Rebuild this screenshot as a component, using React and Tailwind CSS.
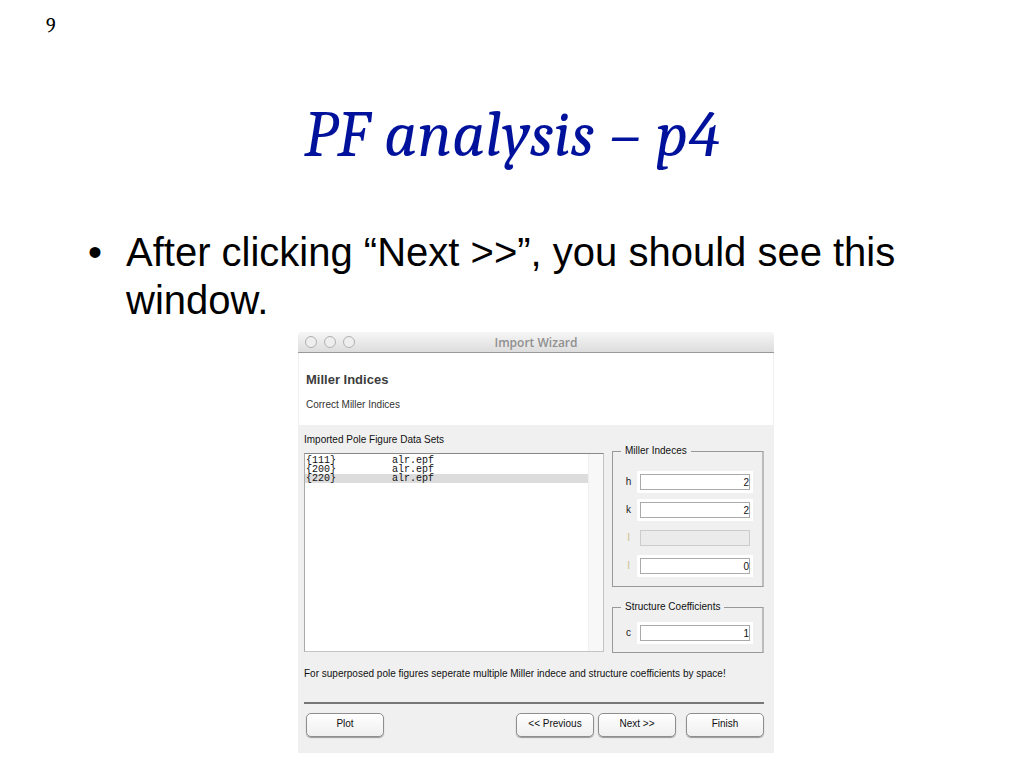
import { useState } from "react";

const dataSets = [
  { id: 1, indices: "{111}", file: "alr.epf" },
  { id: 2, indices: "{200}", file: "alr.epf" },
  { id: 3, indices: "{220}", file: "alr.epf" },
];

const millerFields = [
  { id: "h", label: "h", value: "2" },
  { id: "k", label: "k", value: "2" },
  { id: "i", label: "l", value: "", disabled: true, dim: true },
  { id: "l", label: "l", value: "0", dim: true },
];

function Field({ id, label, value, disabled, dim }) {
  return (
    <div className="flex items-center">
      <label
        htmlFor={id}
        className={`w-[23px] text-center ${dim ? "text-[#c9bf8a]" : "text-[#222222]"}`}
      >
        {label}
      </label>
      <input
        id={id}
        type="text"
        defaultValue={value}
        disabled={disabled}
        className={`h-4 w-0 min-w-0 flex-1 border text-right text-[10px] ${
          disabled
            ? "border-[#cccccc] bg-[#ebebeb]"
            : "border-[#aaaaaa] bg-white ring-3 ring-white"
        }`}
      />
    </div>
  );
}

function Group({ title, children }) {
  return (
    <fieldset className="min-w-0 border border-r-2 border-[#999999] border-r-[#bcbcbc] pr-3 pl-1">
      <legend className="ml-1 px-1 text-[10px] leading-3">{title}</legend>
      {children}
    </fieldset>
  );
}

function WizardButton({ children }) {
  return (
    <button
      type="button"
      className="h-6 w-[78px] rounded-[5px] border border-[#8e8e8e] bg-linear-to-b from-white to-[#efefef] pb-[2px] text-[10px] leading-3 shadow-[0_1px_1px_#999999]"
    >
      {children}
    </button>
  );
}

function ImportWizard() {
  const [selected, setSelected] = useState(3);

  return (
    <section className="w-[476px] overflow-hidden rounded-t-sm bg-[#f0f0f0] text-[10px] leading-3 text-[#111111]">
      <header className="grid h-[21px] grid-cols-[1fr_auto_1fr] items-center border-b border-[#999999] bg-linear-to-b from-[#f6f6f6] to-[#dddddd] px-[7px]">
        <div className="flex gap-[7px]">
          {["Close", "Minimize", "Zoom"].map((name) => (
            <button
              key={name}
              type="button"
              aria-label={name}
              className="size-3 rounded-full border border-[#b0b0b0] bg-[#eeeeee]"
            />
          ))}
        </div>
        <h2 className="pt-px font-['Open_Sans','Noto_Sans',sans-serif] text-[12px] leading-4 font-semibold text-[#909090]">
          Import Wizard
        </h2>
      </header>

      <div className="h-[72px] border-x border-[#f0f0f0] bg-white px-[7px] pt-[19px]">
        <h3 className="text-[13px] leading-4 font-bold text-[#3c3c3c]">Miller Indices</h3>
        <p className="mt-[9px] leading-4 text-[#333333]">Correct Miller Indices</p>
      </div>

      <div className="px-[6px] pt-[9px] pb-4">
        <div className="flex gap-2">
          <div className="flex-1">
            <p>Imported Pole Figure Data Sets</p>
            <div className="mt-[7px] flex h-[199px] border border-[#c4c4c4] border-t-[#888888] border-l-[#aaaaaa] bg-white">
              <div className="flex-1 pt-[2px]">
                <table className="w-full border-collapse font-['Liberation_Mono',monospace] text-[10px] leading-[9px]">
                  <tbody>
                    {dataSets.map((set) => (
                      <tr
                        key={set.id}
                        onClick={() => setSelected(set.id)}
                        className={selected === set.id ? "bg-[#dcdcdc]" : ""}
                      >
                        <td className="w-[87px] p-0 pl-px">{set.indices}</td>
                        <td className="p-0">{set.file}</td>
                      </tr>
                    ))}
                  </tbody>
                </table>
              </div>
              <div className="w-[15px] border-l border-[#eeeeee] bg-[#f8f8f8]" />
            </div>
          </div>

          <div className="mr-1 flex w-[152px] flex-col gap-[14px] pt-[11px]">
            <Group title="Miller Indeces">
              <div className="flex flex-col gap-3 pt-[17px] pb-3">
                {millerFields.map((field) => (
                  <Field key={field.id} {...field} />
                ))}
              </div>
            </Group>
            <Group title="Structure Coefficients">
              <div className="pt-3 pb-[11px]">
                <Field id="c" label="c" value="1" />
              </div>
            </Group>
          </div>
        </div>

        <p className="mt-[15px]">
          For superposed pole figures seperate multiple Miller indece and structure coefficients by
          space!
        </p>

        <footer className="mt-[22px] mr-1 flex gap-1 border-t-2 border-[#777777] pt-[9px]">
          <div className="flex-1 pl-[2px]">
            <WizardButton>Plot</WizardButton>
          </div>
          <WizardButton>&lt;&lt; Previous</WizardButton>
          <WizardButton>Next &gt;&gt;</WizardButton>
          <div className="pl-[6px]">
            <WizardButton>Finish</WizardButton>
          </div>
        </footer>
      </div>
    </section>
  );
}

export default function App() {
  return (
    <main className="min-h-screen bg-white font-['Liberation_Sans',Arial,sans-serif] text-black">
      <p className="pt-4 pl-[46px] font-[Cambria,'Liberation_Serif',serif] text-[20px] leading-5">
        9
      </p>
      <h1 className="mt-[59px] text-center font-[Cambria,'Liberation_Serif',serif] text-[65px] leading-20 text-[#00129c] italic">
        PF analysis – p4
      </h1>
      <ul className="mt-[53px] px-[88px]">
        <li className="flex text-[40px] leading-12">
          <span className="w-[38px] shrink-0">•</span>
          <span>After clicking “Next &gt;&gt;”, you should see this window.</span>
        </li>
      </ul>
      <div className="mt-2 flex justify-center pl-12">
        <ImportWizard />
      </div>
    </main>
  );
}
